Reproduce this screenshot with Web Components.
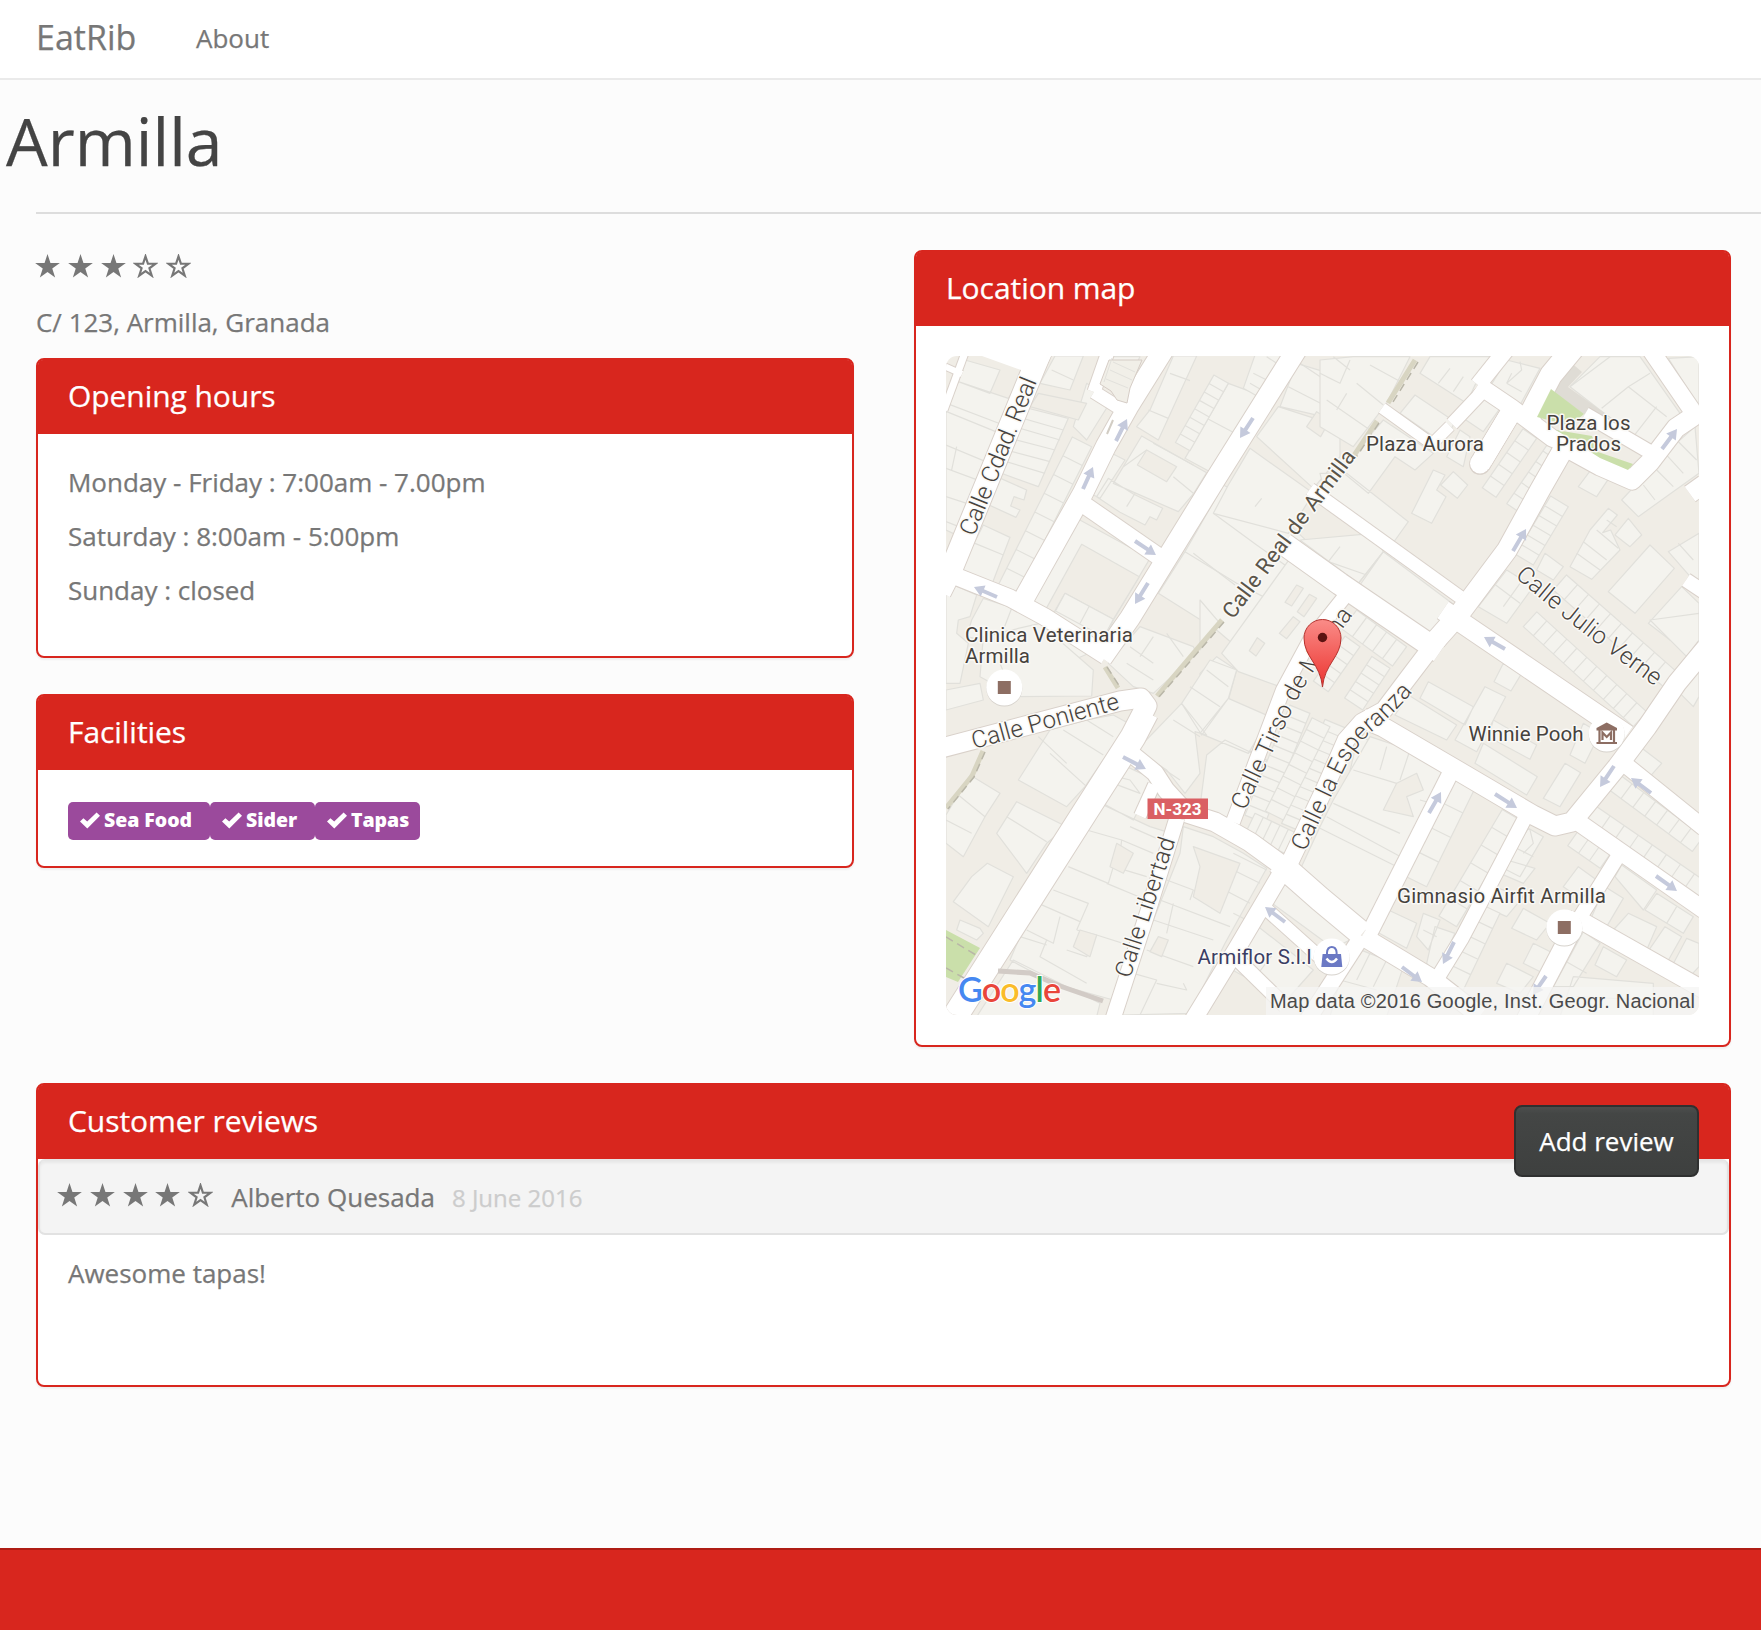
<!DOCTYPE html>
<html lang="en">
<head>
<meta charset="utf-8">
<title>EatRib</title>
<style>
  body { margin: 0; background: #fcfcfc; color: #777; font: 26px/34px "Open Sans", sans-serif; -webkit-text-stroke: .25px; }
</style>
</head>
<body>
<rib-page>
  <rib-navbar slot="nav" brand="EatRib"><span>About</span></rib-navbar>
  <span slot="title">Armilla</span>
  <div slot="left">
    <star-rating value="3" class="lead"></star-rating>
    <rib-line>C/ 123, Armilla, Granada</rib-line>
    <rib-panel heading="Opening hours">
      <rib-line>Monday - Friday : 7:00am - 7.00pm</rib-line>
      <rib-line>Saturday : 8:00am - 5:00pm</rib-line>
      <rib-line>Sunday : closed</rib-line>
    </rib-panel>
    <rib-panel heading="Facilities">
      <rib-tags><rib-tag style="width:142px">Sea Food</rib-tag><rib-tag style="width:105px">Sider</rib-tag><rib-tag style="width:105px">Tapas</rib-tag></rib-tags>
    </rib-panel>
  </div>
  <rib-panel slot="right" heading="Location map"><street-map></street-map></rib-panel>
  <rib-panel slot="reviews" heading="Customer reviews" flush>
    <rib-button slot="action">Add review</rib-button>
    <rib-review author="Alberto Quesada" date="8 June 2016" value="4">Awesome tapas!</rib-review>
  </rib-panel>
</rib-page>

<script>
const define = (name, html, init) => customElements.define(name, class extends HTMLElement {
  constructor() {
    super();
    this.attachShadow({ mode: 'open' }).innerHTML = typeof html === 'function' ? html(this) : html;
    if (init) init(this);
  }
});
const attr = (el, n) => el.getAttribute(n) || '';

define('rib-page', `
<style>
  :host { display: flex; flex-direction: column; height: 1630px; overflow: hidden; }
  h1 { margin: 0; padding: 20px 0 0 6px; height: 112px; font-weight: 400; font-size: 66px; line-height: 80px; color: #444; }
  hr { margin: 0 0 36px 36px; border: 0; height: 2px; background: #ddd; }
  .cols { display: grid; grid-template-columns: 818px 817px; column-gap: 60px; padding-left: 36px; }
  .reviews { padding: 0 30px 0 36px; flex: 1; }
  footer { height: 80px; background: #d8261e; border-top: 2px solid #ae1c14; }
</style>
<slot name="nav"></slot>
<h1><slot name="title"></slot></h1>
<hr>
<div class="cols"><slot name="left"></slot><slot name="right"></slot></div>
<div class="reviews"><slot name="reviews"></slot></div>
<footer></footer>`);

define('rib-navbar', el => `
<style>
  :host { display: flex; height: 78px; background: #fff; border-bottom: 2px solid #eaeaea; padding-left: 36px; }
  b { font-weight: 400; font-size: 34px; line-height: 75px; width: 160px; }
  ::slotted(span) { line-height: 77px; }
</style><b>${attr(el, 'brand')}</b><slot></slot>`);

define('rib-line', `<style>:host { display: block; height: 34px; line-height: 36px; margin-bottom: 20px; white-space: nowrap; letter-spacing: -.01px; }</style><slot></slot>`);

define('rib-panel', el => `
<style>
  :host { display: block; box-sizing: border-box; background: #fff; border: 2px solid #d8261e; border-radius: 8px;
          margin-bottom: 36px; box-shadow: 0 2px 2px rgba(0,0,0,.05); }
  header { display: flex; justify-content: space-between; height: 74px; padding: 0 30px; background: #d8261e; color: #fff; border-radius: 5px 5px 0 0; }
  h3 { margin: 0; font-weight: 400; font-size: 30px; line-height: 72px; letter-spacing: -.06px; }
  .body { padding: ${el.hasAttribute('flush') ? '0' : '30px'}; }
</style>
<header><h3>${attr(el, 'heading')}</h3><slot name="action"></slot></header>
<div class="body"><slot></slot></div>`);

define('star-rating', el => {
  const star = on => {
    const p = [];
    for (let i = 0; i < 10; i++) {
      const r = i % 2 ? 5 : 13, a = -Math.PI / 2 + i * Math.PI / 5;
      p.push((12.5 + r * Math.cos(a)).toFixed(2) + ',' + (13 + r * Math.sin(a)).toFixed(2));
    }
    return on
      ? `<svg width="25" height="24" viewBox="0 0 25 24"><polygon points="${p.join(' ')}" fill="#777"/></svg>`
      : `<svg width="25" height="24" viewBox="0 0 25 24"><polygon points="${p.join(' ')}" fill="none" stroke="#777" stroke-width="2.6" transform="translate(12.5 13) scale(.82) translate(-12.5 -13)"/></svg>`;
  };
  return `<style>:host { display: flex; gap: 7.8px; height: 50px; padding-top: 4px; margin-left: -1px; } svg { display: block; flex: none; }</style>` +
    [1, 2, 3, 4, 5].map(n => star(n <= +attr(el, 'value'))).join('');
});

define('rib-tags', `<style>:host { display: flex; height: 36px; padding-top: 2px; margin-bottom: -2px; }</style><slot></slot>`);
define('rib-tag', `
<style>
  :host { display: flex; box-sizing: border-box; height: 38px; padding-left: 12px; background: #9b4a9c; border-radius: 5px;
          color: #fff; font-weight: 800; font-size: 19.5px; line-height: 36px; white-space: nowrap; letter-spacing: -.05px; -webkit-text-stroke: 0; }
  svg { flex: none; margin: 10px 4px 0 0; }
</style>
<svg width="20" height="17" viewBox="0 0 20 17"><path d="M0 9.6L3.4 6.2 7.2 9.4 16.6 .5 20 3.8 7.3 16.5Z" fill="#fff"/></svg><slot></slot>`);

define('rib-button', `
<style>
  :host { display: block; box-sizing: border-box; width: 185px; height: 72px; margin-top: 20px; position: relative; z-index: 1;
    border: 2px solid #2f3030; border-radius: 8px; background: linear-gradient(#4c4e4d, #444645 10%, #3e403f);
    color: #fff; text-align: center; line-height: 68px; white-space: nowrap; }
</style><slot></slot>`);

define('rib-review', el => `
<style>
  :host { display: block; height: 226px; }
  .well { display: flex; box-sizing: border-box; height: 76px; padding: 18px 0 0 18px; background: #f4f4f4; border: 2px solid #e2e2e2;
    border-radius: 7px; border-top-color: #e6e6e6; box-shadow: inset 0 2px 3px rgba(0,0,0,.05); }
  .who { margin-left: 18px; line-height: 36px; }
  .date { margin-left: 17px; font-size: 24px; line-height: 37px; color: #ccc; }
  .text { padding: 21px 30px; }
</style>
<div class="well"><star-rating value="${attr(el, 'value')}"></star-rating><span class="who">${attr(el, 'author')}</span><span class="date">${attr(el, 'date')}</span></div>
<div class="text"><slot></slot></div>`);

/* ---- street map ---- */
const MAP = (() => {
  // roads: [width, "x,y x,y ..."]
  const roads = [
    [22, '1043,346 1033,370 951,570 940,592'], [7, '966,350 944,410'], [6, '944,366 962,374'],
    [17, '930,566 1010,598 1045,617 1106,656'],
    [20, '1022,602 1083,493 1106,446 1128,407 1166,346'], [13, '1094,392 1110,346'], [13,'1094,392 1126,412'],
    [17, '1080,502 1158,556'], [20, '1299,346 1215,480 1130,618 1102,658'],
    [25, '940,1040 1085,812 1133,737 1146,712'], [19, '930,751 1120,701 1141,698 1147,706 1135,730'],
    [17, '1133,755 1155,773 1166,790 1187,813'], [19, '1187,813 1215,822 1250,842 1283,866'],
    [24, '1278,862 1320,899 1362,934'], [18, '1362,936 1430,977 1480,1016'], [12, '1154,785 1140,816'],
    [15, '1177,818 1150,905 1112,1022'], [17, '1282,872 1236,950 1192,1022'],
    [14, '1233,822 1283,690 1310,640 1350,590'], [17, '1288,866 1325,788 1346,740 1362,722 1384,710 1405,682 1440,636'],
    [13, '1310,489 1460,597'], [22, '1284,544 1340,584 1440,652'],
    [20, '1436,640 1460,613 1507,550 1540,490 1564,448'],
    [17, '1478,385 1512,408 1552,438 1580,450'], [16, '1478,385 1506,350'], [13, '1486,388 1452,424'],
    [22, '1530,415 1551,375 1575,346'], [14, '1585,414 1650,452'], [19, '1560,444 1600,466 1632,480 1650,462 1676,428 1694,416'],
    [17, '1648,346 1700,422'], [20, '1480,464 1516,404'],
    [11, '1382,408 1432,444 1450,426'], [18, '1690,494 1704,484'], [14, '1686,580 1704,592'],
    [20, '1443,610 1527,667 1627,735'],
    [19, '1362,718 1383,727 1460,772 1533,815 1555,826 1572,822 1617,767 1647,727 1677,683 1706,648'],
    [16, '1622,762 1704,828'], [17, '1578,822 1704,910'], [14, '1617,858 1577,922'], [18, '1580,915 1520,1030'],
    [17, '1580,920 1704,990'], [14, '1525,818 1462,938 1435,982'], [16, '1453,768 1370,932'],
    [13, '1265,908 1325,962'], [16, '1362,936 1305,1024'], [14, '1232,954 1285,1006']
  ];
  // building tiles: origin, outlines, dividing lines, courtyards and terraced rows,
  // in thirds of a pixel; a row is x1,y1,x2,y2,depth,count (positive depth = right of travel)
  const tiles = [
    { o: [940, 350],
      b: 'M75 30L180 60 150 130 55 95ZM55 95L205 145 245 80 300 100 185 240 60 560 18 540 18 190ZM345 18L430 18 390 120 300 100ZM225 165L385 205 295 410 130 350ZM170 380L260 420 252 450 222 440 212 468 240 480 228 502 125 455ZM130 525L210 562 155 705 60 662ZM440 100L515 150 440 270 400 230ZM505 20L600 20 545 125 490 95ZM640 18L690 18 610 150 560 130ZM700 18L770 18 655 270 590 230 630 180ZM865 100L1000 150 810 365 735 325ZM605 258L800 368 760 432 715 485 520 400 550 350ZM515 310L555 330 480 445 450 430ZM505 385L580 432 668 475 650 510 630 500 615 525 540 487 470 440ZM410 505L630 625 520 810 480 900 265 770ZM850 405L1010 490 1130 600 900 900 830 840 655 730 735 605ZM30 700L110 735 90 800 55 810 50 850 85 880 60 1000 18 1000 18 700ZM130 745L300 800 470 900 400 930 80 860 95 810Z',
      l: 'M20 160L190 225M20 185L180 250M18 285L150 340M50 290L35 360M18 355L140 400M18 440L110 470M18 515L70 535M335 60L400 90M215 195L370 240M205 225L360 270M190 260L345 300M180 295L330 335M165 325L315 370M105 580L190 615M500 70L560 95M515 45L575 70M585 80L640 105M690 70L750 92M625 180L685 205M800 205L885 250M620 300L550 350M640 280L760 345M700 380L760 430M560 470L585 430M735 605L890 700 1010 760M820 490L950 585 1070 670M900 900L1000 760M215 775L190 840',
      c: 'M620 300L710 350 680 395 592 345ZM425 583L598 680 520 808 375 730 335 800 312 788ZM295 130L440 160 415 210 270 170Z',
      r: [[455,290,230,740,65,8],[865,100,750,302,50,8],[375,730,520,808,60,2]] },
    { o: [900, 240],
      b: 'M985 735L1050 625 1240 760 1165 880 940 820ZM1070 590L1135 500 1320 560 1320 650 1240 745ZM1190 370L1420 440 1400 560 1140 500ZM1065 345L1145 345 1075 470 1030 445Z',
      l: 'M1085 775L1065 800M1200 370L1320 450M1165 440L1320 520M1100 350L1130 370M1060 400L1100 420M1050 430L1085 450', c: 'M1250 515L1290 540 1262 590 1220 560Z', r: [] },
    { o: [1200, 540],
      b: 'M270 55L445 185 400 240 240 440 115 395 65 340ZM80 480L205 540 165 640 75 600 25 560ZM550 35L770 200 695 300 480 135ZM300 0L520 -20 550 35 475 130ZM0 180L60 250 0 330ZM50 350L110 390 85 480 25 560 0 540 0 400ZM475 585L690 700 600 900 430 780Z',
      l: 'M420 20L385 65M550 35L475 130M385 65L500 105M20 420L90 480M40 425L10 460M0 480L55 515M555 610L530 680M530 680L640 735M640 660L615 720M-20 40L105 135',
      c: 'M290 135L310 145 275 198 255 187ZM328 163L350 175 312 230 292 215ZM280 230L300 245 260 296 238 280ZM172 293L194 310 168 348 148 332Z',
      r: [[470,210,620,320,72,5],[480,320,385,455,55,5],[570,385,488,510,65,5],[330,520,195,850,65,11],[375,538,245,850,-80,11]] },
    { o: [900, 620],
      b: 'M250 50L420 10 580 150 575 228 350 230 240 170ZM138 210L240 190 250 240 138 270ZM210 465L300 520 255 590 190 710 138 670 138 585ZM350 545L500 620 440 670 380 760 290 640ZM262 730L340 770 265 920 160 845 215 770ZM640 285L685 310 555 500 500 560 355 480 450 330 560 300ZM600 550L750 620 815 640 640 1140 460 1090 330 1020 360 950 560 630ZM850 620L940 650 1030 700 1100 745 975 970 870 1180 665 1185 740 950 840 700ZM1150 790L1360 955 1300 985 1110 845ZM1075 920L1240 1050 1160 1140 980 1040ZM975 360L1100 420 1000 600 900 560 920 405ZM710 390L845 250 920 345 885 335 900 460 855 520 800 450ZM625 130L720 20 880 80 890 100 760 220 700 200ZM930 120L1010 150 985 235 905 345 845 250ZM985 235L1110 290 1045 400 900 340ZM180 900L240 925 250 940 230 960 170 930ZM340 1020L600 1150 590 1190 230 1190ZM680 440L765 480 700 600 600 545Z',
      l: 'M175 525L255 590M138 600L215 640M320 590L440 665M490 330L610 405M450 400L560 500M415 350L500 430M560 300L640 350M560 630L665 660 660 700M505 740L625 790 640 740M460 810L565 850 530 930M415 850L540 905M380 930L460 970 480 890M530 930L590 945 560 1010 500 990M690 620L770 655M665 660L760 700M640 740L740 770M620 790L740 840M590 945L700 980M440 960L420 1010 560 1090M360 950L440 975M935 790L1050 850M980 740L1080 790M1000 700L1100 750M800 780L880 810 870 840M780 840L990 920M760 900L940 960M740 990L880 1040M700 1060L770 1080 720 1185M820 850L800 940M1000 880L1040 900M690 80L760 130M760 50L720 110M680 130L760 180M800 40L850 110M920 150L985 200M870 200L960 260M820 300L900 350M720 400L840 480M1120 1000L1060 1080M640 490L720 520 690 480 650 470M300 130L340 230M770 1090L860 1110 850 1090',
      c: 'M880 680L1020 730 960 880 880 830 900 740ZM540 930L590 945 570 1010 520 980ZM650 670L700 700 670 760 630 740ZM775 950L805 960 785 1010 750 995Z',
      r: [[1065,580,1190,640,70,5]] },
    { o: [1320, 240],
      b: 'M0 360L100 350 270 350 200 490 100 620 0 560ZM190 540L340 640 285 690 225 650 145 760 60 690ZM330 350L540 350 465 435 440 490 300 400ZM285 465L405 545 370 610 240 520ZM475 465L540 505 490 575 430 535ZM560 360L660 385 600 495 510 440ZM340 690L375 705 350 750 378 770 335 850 275 820ZM400 695L443 735 412 775 362 735ZM0 700L80 700 265 845 215 915 20 780ZM840 350L960 350 1080 520 990 620 840 510 750 440ZM1045 355L1137 350 1137 500ZM1035 640L1125 560 1137 700 955 830 905 780ZM820 680L870 710 830 770 775 740ZM865 805L892 825 848 878 872 870 900 930 815 1018 750 980 810 870ZM925 835L965 885 930 920 885 885ZM990 915L1063 985 945 1120 865 1055ZM1045 935L1137 880 1137 1040ZM1085 1040L1137 1090 1137 1230 1050 1200 985 1150ZM675 940L730 980 700 1020 650 990ZM560 990L640 1040 560 1150 475 1100ZM420 570L450 590 430 680 380 650Z',
      l: 'M150 375L250 430M110 430L190 495M80 460L50 510M20 480L150 570M0 400L60 430M40 350L90 390M20 410L60 430 90 360M390 385L355 430M430 410L400 455M560 430L605 455M575 400L560 430M750 440L870 350M845 505L925 440 1040 530M925 440L990 400M940 590L1010 500M1010 690L1060 740M970 735L1005 780M1035 640L1090 700M1070 600L1130 660M860 840L890 860M830 870L895 925M790 905L860 960M770 940L840 990M1075 910L1120 960M520 1030L600 1090M600 1030L550 1100M600 365L605 390 560 430',
      c: '',
      r: [[650,595,528,772,50,5],[740,635,610,825,60,6],[745,800,640,975,62,6]] },
    { o: [1320, 620],
      b: 'M325 185L460 260 435 315 300 235ZM265 225L410 315 380 360 225 285ZM495 200L557 230 470 395 405 360ZM550 130L605 160 573 213 522 185ZM520 300L650 375 630 418 505 350ZM490 370L652 470 620 525 465 430ZM735 430L782 458 720 560 670 535ZM790 310L840 340 795 430 750 405ZM150 350L270 390 370 450 300 600 135 915 -60 750 0 620 40 540ZM205 870L290 910 260 985 170 935ZM310 880L360 900 325 990 290 950ZM345 920L405 940 350 1060 320 1030ZM625 625L670 650 600 770 550 745ZM560 720L645 745 610 790 540 760ZM610 865L690 910 650 960 575 925ZM775 740L830 780 800 850 730 800ZM560 1030L640 1070 600 1120 530 1090ZM640 970L700 1000 670 1060 610 1030ZM960 380L1025 430 985 475 920 430ZM905 735L1010 810 970 870 885 770ZM1010 820L1120 890 1090 940 975 870ZM925 880L1010 920 980 990 880 930ZM1035 920L1085 950 1040 1030 980 1000ZM1100 955L1137 970 1137 1040 1095 1085 1050 1050ZM855 800L910 835 860 920 815 890ZM790 935L840 970 760 1100 700 1100ZM850 980L920 1020 890 1070 825 1035ZM760 1070L1000 1090 1000 1190 720 1190ZM110 985L250 1040 200 1190 30 1190 60 1080ZM1137 150L1075 215 1120 260 1137 230ZM520 800L610 830 560 890 470 850ZM990 0L1137 -20 1137 60 1100 110Z',
      l: 'M40 550L240 640M20 590L260 720M100 450L230 490M200 380L180 450M270 390L240 480M0 625L240 745M150 1000L110 1080M60 1080L170 1110M200 1020L160 1100M1070 860L1040 910M630 630L640 670 610 700M580 680L640 710M770 1130L980 1140M730 1020L800 1060M60 440L20 560M300 540L370 560M310 930L350 950',
      c: 'M230 490L290 460 310 510 260 530 280 590 190 570Z',
      r: [[465,505,320,800,68,4],[600,600,410,920,62,6],[540,880,430,1110,72,5],[775,632,872,700,55,3],
          [800,600,1137,832,-50,8],[900,465,1150,650,55,7],[610,20,940,320,-60,11],[700,-90,1030,200,-60,10],[30,320,-110,600,60,8]] }
  ];
  const arrows = [
    [1116,441,1127,419],[1083,489,1093,467],[1253,418,1240,438],[1135,541,1156,555],[1148,583,1135,604],
    [997,597,974,587],[1513,551,1526,529],[1662,449,1677,429],[1505,649,1484,637],[1123,757,1146,769],
    [1285,922,1265,907],[1614,766,1600,787],[1651,793,1631,778],[1495,794,1517,808],[1429,813,1441,792],
    [1656,876,1677,891],[1454,942,1443,964],[1402,967,1422,982],[1546,976,1533,995]
  ];
  const row = ([x1, y1, x2, y2, d, n]) => {
    const L = Math.hypot(x2 - x1, y2 - y1), nx = -(y2 - y1) / L * d, ny = (x2 - x1) / L * d;
    let s = `M${x1} ${y1}L${x2} ${y2}l${nx.toFixed(1)} ${ny.toFixed(1)}L${(x1 + nx).toFixed(1)} ${(y1 + ny).toFixed(1)}Z`;
    for (let i = 1; i < n; i++) s += `M${(x1 + (x2 - x1) * i / n).toFixed(1)} ${(y1 + (y2 - y1) * i / n).toFixed(1)}l${nx.toFixed(1)} ${ny.toFixed(1)}`;
    return `<path d="${s}"/>`;
  };
  const cells = tiles.map(t => `<g transform="translate(${t.o}) scale(.33333)"><path d="${t.b}"/><path d="${t.l}" fill="none"/><path d="${t.c}" fill="#f0ede6"/>${t.r.map(row).join('')}</g>`).join('');
  const lines = extra => roads.map(([w, p]) => `<polyline points="${p}" stroke-width="${w + extra}"/>`).join('');
  const arr = arrows.map(([a, b, c, d]) => {
    const L = Math.hypot(c - a, d - b);
    return `<path transform="translate(${a} ${b}) rotate(${(Math.atan2(d - b, c - a) * 180 / Math.PI).toFixed(1)})" d="M0 -2H${(L - 10).toFixed(1)}V-6L${L.toFixed(1)} 0 ${(L - 10).toFixed(1)} 6V2H0Z"/>`;
  }).join('');
  const poi = (x, y, inner) => `<circle cx="${x}" cy="${y + 1}" r="18" fill="#d6d2cc"/><circle cx="${x}" cy="${y}" r="18" fill="#fff"/>${inner}`;
  const t = (x, y, w, s, f) => `<text x="${x}" y="${y}" textLength="${w}" ${f || ''}>${s}</text>`;
  const street = (id, d, w, s, f) => `<path id="${id}" d="${d}" fill="none" stroke="none"/><text ${f || ''} class="st"><textPath href="#${id}" textLength="${w}">${s}</textPath></text>`;
  return `<svg viewBox="946 356 753 659" width="753" height="659">
<rect x="946" y="356" width="753" height="659" fill="#f0ede6"/>
<g fill="#f4f3ee" stroke="#e1e0db" stroke-width="3.6" stroke-linejoin="round">${cells}</g>
<path d="M1568 360L1582 372 1568 387 1610 417 1584 414 1549 389Z" fill="#dfdcd5"/>
<g fill="none" stroke="#d9d1ca" stroke-linejoin="round">${lines(2)}</g>
<g fill="none" stroke="#fff" stroke-linejoin="round">${lines(0)}</g>
<path d="M982 356H1051L1040 378 1021 370Z" fill="#fff"/>
<circle cx="1480" cy="464" r="10.8" fill="#d9d1ca"/><circle cx="1480" cy="463.500" r="10" fill="#fff"/><path d="M1480 464L1516 404" stroke="#fff" stroke-width="20"/>
<path d="M1100 384L1109 360H1142L1130 388 1127 403 1117 400 1111 391Z" fill="#f1efe8" stroke="#d6cdc6"/>
<path d="M1104 382L1112 358M1113 362l22 10M1110 370l22 10M1106 379l22 9" stroke="#e2e1dc" fill="none"/>
<path d="M1107 434l6-14" stroke="#d2cdc4" stroke-width="2"/>
<g fill="#cadfaa"><path d="M1551 389L1584 414 1570 426 1537 417Z"/><path d="M1556 430L1592 436 1598 452 1633 464 1628 470 1600 458Z"/>
<path d="M946 930L980 948 958 982 946 977Z"/></g>
<g fill="none" stroke="#d8d5c2" stroke-width="5"><path d="M1415 360L1388 403M1377 421L1353 457M1222 620L1198 648 1157 696M1105 667L1118 688M983 751L972 776 946 808"/></g>
<g fill="none" stroke="#b9b6a8" stroke-width="1.5" stroke-dasharray="8 5"><path d="M1418 362L1391 405M1379 423L1355 459M1224 622L1200 650 1159 697M1107 667L1120 687M985 752L974 777 948 809M946 937L976 955M946 968L964 978"/></g>
<path d="M998 971L1030 973 1060 986 1103 1001" fill="none" stroke="#d2cbc6" stroke-width="5"/>
<g fill="#c5cadc">${arr}</g>
<g class="lab">
${street('s1', 'M974 537L1040 374', 168, 'Calle Cdad. Real')}
${street('s2', 'M1233 620L1363 448', 205, 'Calle Real de Armilla', 'fill="#5a554a" style="font-weight:400;font-size:22px"')}
${street('s3', 'M1245 811L1298 698Q1312 670 1358 608', 225, 'Calle Tirso de Molina')}
${street('s4', 'M1305 852L1342 774Q1356 744 1375 729T1416 688', 196, 'Calle la Esperanza')}
${street('s5', 'M974 749L1126 707', 152, 'Calle Poniente')}
${street('s6', 'M1130 979L1178 832', 146, 'Calle Libertad')}
${street('s7', 'M1515 577Q1578 632 1670 697', 178, 'Calle Julio Verne')}
${t(1366, 451, 118, 'Plaza Aurora')}${t(1546.5, 430, 84, 'Plaza los')}${t(1556, 451, 65, 'Prados')}
${t(965, 642, 168, 'Clinica Veterinaria')}${t(965, 662.5, 65, 'Armilla')}
${t(1468.5, 741, 115, 'Winnie Pooh')}${t(1397, 903, 209, 'Gimnasio Airfit Armilla')}
${t(1197.5, 964, 114, 'Armiflor S.l.l', 'fill="#3b3d63"')}
</g>
${poi(1004.3, 687.5, '<rect x="997.8" y="681" width="13" height="13" fill="#8d6e63"/>')}
${poi(1564.3, 927.5, '<rect x="1557.8" y="921" width="13" height="13" fill="#8d6e63"/>')}
${poi(1331.7, 956.5, '<path d="M1322.6 954H1341L1342.3 967H1321.3Z" fill="#6b79c4"/><path d="M1327 955V952.5Q1327.500 947 1331.800 947T1336.600 952.500V955" fill="none" stroke="#6b79c4" stroke-width="2"/><path d="M1326.500 958.500Q1331.800 965.500 1337 958.500" fill="none" stroke="#fff" stroke-width="2.400"/>')}
${poi(1606.7, 733.5, '<g fill="none" stroke="#8d6e63" stroke-width="2.200"><path d="M1599.500 729V743M1614 729V743M1596.500 743H1617M1602.500 740V732.500L1606.700 737 1611 732.500V740"/></g><path d="M1606.700 722.500L1617 728V730.500H1596.500V728Z" fill="#8d6e63"/>')}
<rect x="1147.500" y="798.500" width="60.500" height="20.500" fill="#da5f63"/>
<text x="1153.500" y="814.500" textLength="48" style="font:700 17px Roboto" fill="#fff">N-323</text>
<path d="M1322.500 687C1320.500 664 1304 657 1304 638A18.500 18.500 0 0 1 1341 638C1341 657 1324.500 664 1322.500 687Z" fill="url(#pin)" stroke="#b5322e" stroke-width="1"/>
<circle cx="1322.500" cy="637.500" r="4.700" fill="#5c1311"/>
<defs><linearGradient id="pin" x1="0" y1="0" x2="0" y2="1"><stop offset="0" stop-color="#fa8c88"/><stop offset="1" stop-color="#ec3430"/></linearGradient></defs>
<text x="958" y="1002" textLength="103" style="font:600 34px Lato" stroke="#fff" stroke-width="2" paint-order="stroke"><tspan fill="#4688f1">G</tspan><tspan fill="#e9453a">o</tspan><tspan fill="#fabc2a">o</tspan><tspan fill="#4688f1">g</tspan><tspan fill="#34a853">l</tspan><tspan fill="#e9453a">e</tspan></text>
<rect x="1266" y="987" width="433" height="28" fill="#f5f5f3" fill-opacity=".78"/>
<text x="1270" y="1008" textLength="425" style="font:20px 'Liberation Sans'" fill="#4a4a4a">Map data ©2016 Google, Inst. Geogr. Nacional</text>
</svg>`;
})();
define('street-map', `
<style>
  :host { display: block; width: 753px; height: 659px; border-radius: 11px; overflow: hidden; -webkit-text-stroke: 0; }
  svg { display: block; }
  .lab text { font-family: Roboto, sans-serif; font-size: 20.5px; paint-order: stroke; -webkit-text-stroke: 3px #faf9f6; stroke: #faf9f6; stroke-width: 3px; stroke-linejoin: round; }
  .lab text:not([fill]) { fill: #46423d; }
  .lab .st { font-weight: 300; font-size: 24px; }
</style>${MAP}`);
</script>
</body>
</html>
